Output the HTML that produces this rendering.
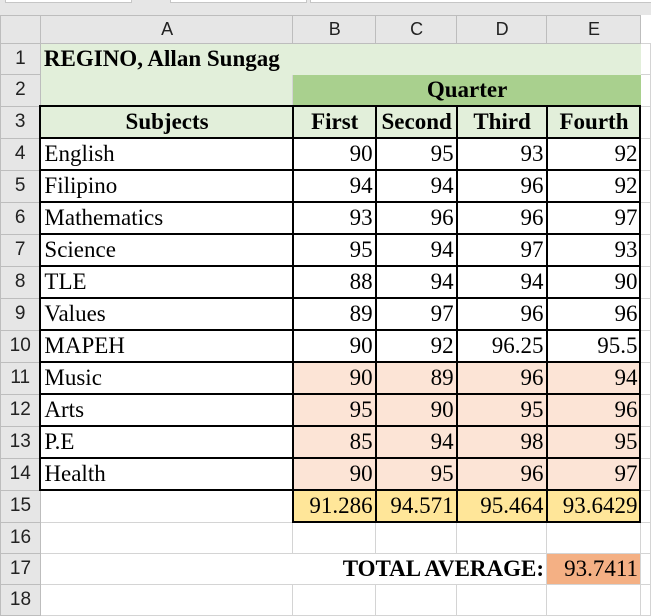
<!DOCTYPE html><html><head><style>
body{margin:0;width:651px;height:596px;overflow:hidden;background:#fff;position:relative;font-family:"Liberation Serif",serif}
.top{position:absolute;left:0;top:0;width:651px;height:15px;background:#e6e6e6}
.top div{position:absolute;top:0;height:2px;background:#fff;border:1px solid #c6c6c6;border-top:none}
table{position:absolute;left:0;top:15px;border-collapse:collapse;table-layout:fixed}
td{border:1px solid #d4d4d4;height:30px;max-height:30px;padding:0 2px 0 3px;font-family:"Liberation Serif",serif;font-size:23px;white-space:nowrap;overflow:hidden;text-align:right;line-height:30px;color:#000;box-sizing:content-box}
tr.h td{height:27px;background:#e6e6e6;font-family:"Liberation Sans",sans-serif;font-size:18px;text-align:center;color:#222;border-color:#bdbdbd;line-height:27px}
td.r{background:#e6e6e6;font-family:"Liberation Sans",sans-serif;font-size:19px;text-align:center;color:#222;border-color:#bdbdbd;padding:0}
.l{text-align:left}.c{text-align:center}.b{font-weight:bold}
.g{background:#e2efda}.dg{background:#a9d08e}.p{background:#fce4d6}.y{background:#ffe699}.o{background:#f4b084}
.k{border:2px solid #000}
</style></head><body>
<div class="top"><div style="left:5px;width:125px"></div><div style="left:170px;width:135px"></div><div style="left:310px;width:341px"></div></div>
<table>
<colgroup><col style="width:40px"><col style="width:253px"><col style="width:83px"><col style="width:81px"><col style="width:90px"><col style="width:94px"><col style="width:10px"></colgroup>
<tr class="h"><td style="background:#e6e6e6"></td><td>A</td><td>B</td><td>C</td><td>D</td><td>E</td><td style="background:#fff;border:none"></td></tr>
<tr><td class="r">1</td><td class="l b g" colspan="5" style="border-color:#e2efda">REGINO, Allan Sungag</td><td></td></tr>
<tr><td class="r">2</td><td class="g"></td><td class="c b dg" colspan="4" style="border-color:#a9d08e">Quarter</td><td></td></tr>
<tr><td class="r">3</td><td class="c b g k">Subjects</td><td class="c b k g">First</td><td class="c b k g">Second</td><td class="c b k g">Third</td><td class="c b k g">Fourth</td><td></td></tr>
<tr><td class="r">4</td><td class="l k">English</td><td class="k">90</td><td class="k">95</td><td class="k">93</td><td class="k">92</td><td></td></tr>
<tr><td class="r">5</td><td class="l k">Filipino</td><td class="k">94</td><td class="k">94</td><td class="k">96</td><td class="k">92</td><td></td></tr>
<tr><td class="r">6</td><td class="l k">Mathematics</td><td class="k">93</td><td class="k">96</td><td class="k">96</td><td class="k">97</td><td></td></tr>
<tr><td class="r">7</td><td class="l k">Science</td><td class="k">95</td><td class="k">94</td><td class="k">97</td><td class="k">93</td><td></td></tr>
<tr><td class="r">8</td><td class="l k">TLE</td><td class="k">88</td><td class="k">94</td><td class="k">94</td><td class="k">90</td><td></td></tr>
<tr><td class="r">9</td><td class="l k">Values</td><td class="k">89</td><td class="k">97</td><td class="k">96</td><td class="k">96</td><td></td></tr>
<tr><td class="r">10</td><td class="l k">MAPEH</td><td class="k">90</td><td class="k">92</td><td class="k">96.25</td><td class="k">95.5</td><td></td></tr>
<tr><td class="r">11</td><td class="l k">Music</td><td class="k p">90</td><td class="k p">89</td><td class="k p">96</td><td class="k p">94</td><td></td></tr>
<tr><td class="r">12</td><td class="l k">Arts</td><td class="k p">95</td><td class="k p">90</td><td class="k p">95</td><td class="k p">96</td><td></td></tr>
<tr><td class="r">13</td><td class="l k">P.E</td><td class="k p">85</td><td class="k p">94</td><td class="k p">98</td><td class="k p">95</td><td></td></tr>
<tr><td class="r">14</td><td class="l k">Health</td><td class="k p">90</td><td class="k p">95</td><td class="k p">96</td><td class="k p">97</td><td></td></tr>
<tr><td class="r">15</td><td></td><td class="k y">91.286</td><td class="k y">94.571</td><td class="k y">95.464</td><td class="k y">93.6429</td><td></td></tr>
<tr><td class="r">16</td><td></td><td></td><td></td><td></td><td></td><td></td></tr>
<tr><td class="r">17</td><td colspan="4" class="b" style="border-color:#d4d4d4">TOTAL AVERAGE:</td><td class="o">93.7411</td><td></td></tr>
<tr><td class="r">18</td><td></td><td></td><td></td><td></td><td></td><td></td></tr>
</table>
</body></html>
